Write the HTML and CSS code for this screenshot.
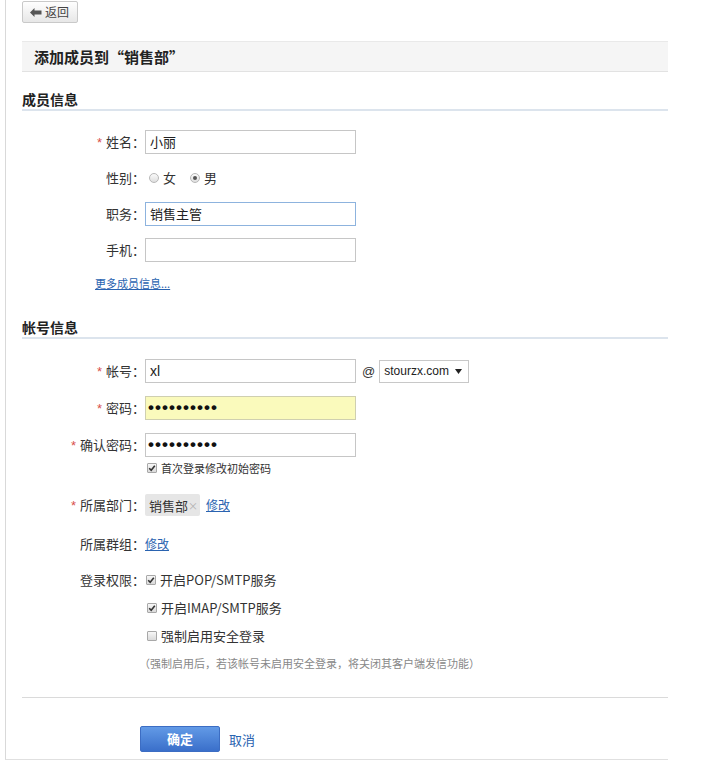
FILE: index.html
```html
<!DOCTYPE html>
<html lang="zh-CN">
<head>
<meta charset="utf-8">
<title>添加成员</title>
<link rel="stylesheet" href="styles.css">
</head>
<body>
<div class="page">
  <div class="toolbar">
    <button class="back" type="button">
      <svg class="back-ico" width="12" height="9" viewBox="0 0 12 9"><path d="M0 4.5 L4.5 0 L4.5 2.6 L11.5 2.6 L11.5 6.4 L4.5 6.4 L4.5 9 Z" fill="#555"/></svg>
      <span>返回</span>
    </button>
  </div>

  <div class="titlebar"><h1>添加成员到“销售部”</h1></div>

  <h2 class="sec">成员信息</h2>
  <div class="row r-first">
    <span class="lbl"><em class="req">*</em>姓名：</span>
    <div class="input">小丽</div>
  </div>
  <div class="row r-m">
    <span class="lbl">性别：</span>
    <span class="radio"></span><span class="opt">女</span>
    <span class="radio on"></span><span class="opt">男</span>
  </div>
  <div class="row r-m">
    <span class="lbl">职务：</span>
    <div class="input focus">销售主管</div>
  </div>
  <div class="row r-m">
    <span class="lbl">手机：</span>
    <div class="input"></div>
  </div>
  <div class="more"><a href="#">更多成员信息...</a></div>

  <h2 class="sec sec2">帐号信息</h2>
  <div class="row r-a1">
    <span class="lbl"><em class="req">*</em>帐号：</span>
    <div class="input latin">xl</div>
    <span class="at">@</span>
    <div class="select"><span>stourzx.com</span><svg width="7" height="5" viewBox="0 0 7 5"><path d="M0 0 H7 L3.5 5 Z" fill="#222"/></svg></div>
  </div>
  <div class="row r-a">
    <span class="lbl"><em class="req">*</em>密码：</span>
    <div class="input pwd">••••••••••</div>
  </div>
  <div class="row r-a">
    <span class="lbl"><em class="req">*</em>确认密码：</span>
    <div class="input pwd2">••••••••••</div>
  </div>
  <div class="row r-check">
    <span class="cb on"><svg width="10" height="10" viewBox="0 0 10 10"><path d="M2.2 5.2 L4.2 7.2 L7.8 2.8" fill="none" stroke="#333" stroke-width="1.6"/></svg></span>
    <span class="small">首次登录修改初始密码</span>
  </div>
  <div class="row r-dept">
    <span class="lbl"><em class="req">*</em>所属部门：</span>
    <span class="tag">销售部<span class="x">×</span></span>
    <a class="lnk edit" href="#">修改</a>
  </div>
  <div class="row r-group">
    <span class="lbl">所属群组：</span>
    <a class="lnk" href="#">修改</a>
  </div>
  <div class="row r-perm">
    <span class="lbl">登录权限：</span>
    <span class="cb on"><svg width="10" height="10" viewBox="0 0 10 10"><path d="M2.2 5.2 L4.2 7.2 L7.8 2.8" fill="none" stroke="#333" stroke-width="1.6"/></svg></span>
    <span class="opt2">开启POP/SMTP服务</span>
  </div>
  <div class="row r-sub">
    <span class="cb on"><svg width="10" height="10" viewBox="0 0 10 10"><path d="M2.2 5.2 L4.2 7.2 L7.8 2.8" fill="none" stroke="#333" stroke-width="1.6"/></svg></span>
    <span class="opt2">开启IMAP/SMTP服务</span>
  </div>
  <div class="row r-sub">
    <span class="cb"></span>
    <span class="opt2">强制启用安全登录</span>
  </div>
  <div class="note">（强制启用后，若该帐号未启用安全登录，将关闭其客户端发信功能）</div>

  <div class="sep"></div>

  <div class="actions">
    <button class="ok" type="button">确定</button>
    <a class="cancel" href="#">取消</a>
  </div>
</div>
</body>
</html>
```

FILE: styles.css
```css
* { box-sizing: border-box; margin: 0; padding: 0; }
html, body { background: #fff; }
body {
  font-family: "Noto Sans CJK SC", "Liberation Sans", sans-serif;
  font-size: 13px;
  color: #333;
}
a { color: #2a63b0; }

.page {
  margin-left: 5px;
  width: 663px;
  border-left: 1px solid #d9d9d9;
  border-bottom: 1px solid #e0e0e0;
  padding: 1px 0 7px 16px;
}

.toolbar { height: 22px; }
.back {
  display: flex;
  align-items: center;
  gap: 3px;
  width: 56px;
  height: 22px;
  padding-left: 7px;
  border: 1px solid #c9c9c9;
  border-radius: 2px;
  background: linear-gradient(#fefefe, #e7e7e7);
  font: 12px/1 "Noto Sans CJK SC", sans-serif;
  color: #444;
}
.back-ico { flex: none; }

.titlebar {
  margin-top: 18px;
  height: 31px;
  background: #f5f5f5;
  border-top: 1px solid #e9e9e9;
  border-bottom: 1px solid #e2e2e2;
  padding-left: 12px;
  display: flex;
  align-items: center;
}
.titlebar h1 {
  font-size: 15px;
  font-weight: bold;
  line-height: 20px;
  color: #222;
}

.sec {
  margin-top: 17px;
  font-size: 14px;
  font-weight: bold;
  line-height: 20px;
  color: #222;
  border-bottom: 2px solid #dce4ed;
}
.sec2 { margin-top: 26px; }

.row {
  display: flex;
  align-items: center;
  height: 24px;
}
.r-first { margin-top: 19px; }
.r-m { margin-top: 12px; }
.r-a1 { margin-top: 20px; }
.r-a { margin-top: 13px; }
.r-check { margin-top: 3px; height: 16px; padding-left: 124px; }
.r-dept { margin-top: 18px; height: 22px; }
.r-group { margin-top: 18px; height: 20px; }
.r-perm { margin-top: 16px; height: 20px; }
.r-sub { margin-top: 8px; height: 20px; padding-left: 124px; }

.lbl {
  flex: none;
  width: 123px;
  text-align: right;
  font-size: 13px;
  line-height: 24px;
  color: #333;
  white-space: nowrap;
}
.req {
  font-style: normal;
  color: #d8504c;
  font-family: "Liberation Sans", sans-serif;
  font-size: 13px;
  margin-right: 4px;
}

.input {
  flex: none;
  width: 211px;
  height: 24px;
  border: 1px solid #c6c6c6;
  padding: 0 4px;
  font-size: 13px;
  line-height: 22px;
  color: #222;
  background: #fff;
  white-space: nowrap;
  overflow: hidden;
}
.input.focus { border-color: #8db3de; }
.input.latin { font-family: "Liberation Sans", sans-serif; font-size: 14px; }
.input.pwd, .input.pwd2 {
  font-family: "Liberation Sans", sans-serif;
  font-size: 17px;
  font-weight: bold;
  letter-spacing: 1.05px;
  color: #111;
  padding-left: 2px;
}
.input.pwd { background: #fafabc; border-color: #cfcfb0; }

.radio {
  flex: none;
  width: 10px;
  height: 10px;
  border-radius: 50%;
  border: 1px solid #b8b8b8;
  background: linear-gradient(#fafafa, #dedede);
  margin-left: 4px;
  position: relative;
}
.radio.on { margin-left: 14px; }
.radio.on::after {
  content: "";
  position: absolute;
  left: 2px;
  top: 2px;
  width: 4px;
  height: 4px;
  border-radius: 50%;
  background: #555;
}
.opt { margin-left: 4px; font-size: 13px; line-height: 20px; }

.more { margin-top: 13px; padding-left: 73px; height: 16px; line-height: 16px; }
.more a { font-size: 11px; }

.at {
  margin-left: 6px;
  font-family: "Liberation Sans", sans-serif;
  font-size: 13px;
  color: #333;
}
.select {
  margin-left: 4px;
  width: 90px;
  height: 23px;
  border: 1px solid #c8c8c8;
  display: flex;
  align-items: center;
  justify-content: space-between;
  padding: 0 6px 0 4px;
  font-family: "Liberation Sans", sans-serif;
  font-size: 12px;
  color: #222;
}

.cb {
  flex: none;
  width: 10px;
  height: 10px;
  border: 1px solid #a8a8a8;
  border-radius: 1px;
  background: linear-gradient(#f7f7f7, #dadada);
  display: flex;
  align-items: center;
  justify-content: center;
  overflow: hidden;
  margin-left: 1px;
}
.cb svg { flex: none; }
.small { margin-left: 4px; font-size: 11px; line-height: 16px; color: #333; }
.opt2 { margin-left: 4px; font-size: 13px; line-height: 20px; color: #333; }

.tag {
  display: flex;
  align-items: center;
  height: 22px;
  padding: 0 2px 0 4px;
  background: #e6e6e6;
  border-radius: 2px;
  font-size: 13px;
  color: #333;
}
.tag .x { color: #b0b0b0; font-size: 10px; }
.lnk { font-size: 12px; line-height: 20px; }
.edit { margin-left: 6px; }

.note {
  margin-top: 9px;
  padding-left: 117px;
  height: 16px;
  line-height: 16px;
  font-size: 11px;
  color: #888;
  white-space: nowrap;
}

.sep { margin-top: 26px; border-top: 1px solid #dadada; }

.actions {
  margin-top: 28px;
  padding-left: 118px;
  display: flex;
  align-items: center;
  height: 26px;
}
.ok {
  width: 80px;
  height: 26px;
  border: 1px solid #3c6dc3;
  border-radius: 2px;
  background: linear-gradient(#629ae6, #3a6fca);
  color: #fff;
  font: bold 13px/24px "Noto Sans CJK SC", sans-serif;
}
.cancel {
  margin-left: 9px;
  font-size: 13px;
  text-decoration: none;
}
```
